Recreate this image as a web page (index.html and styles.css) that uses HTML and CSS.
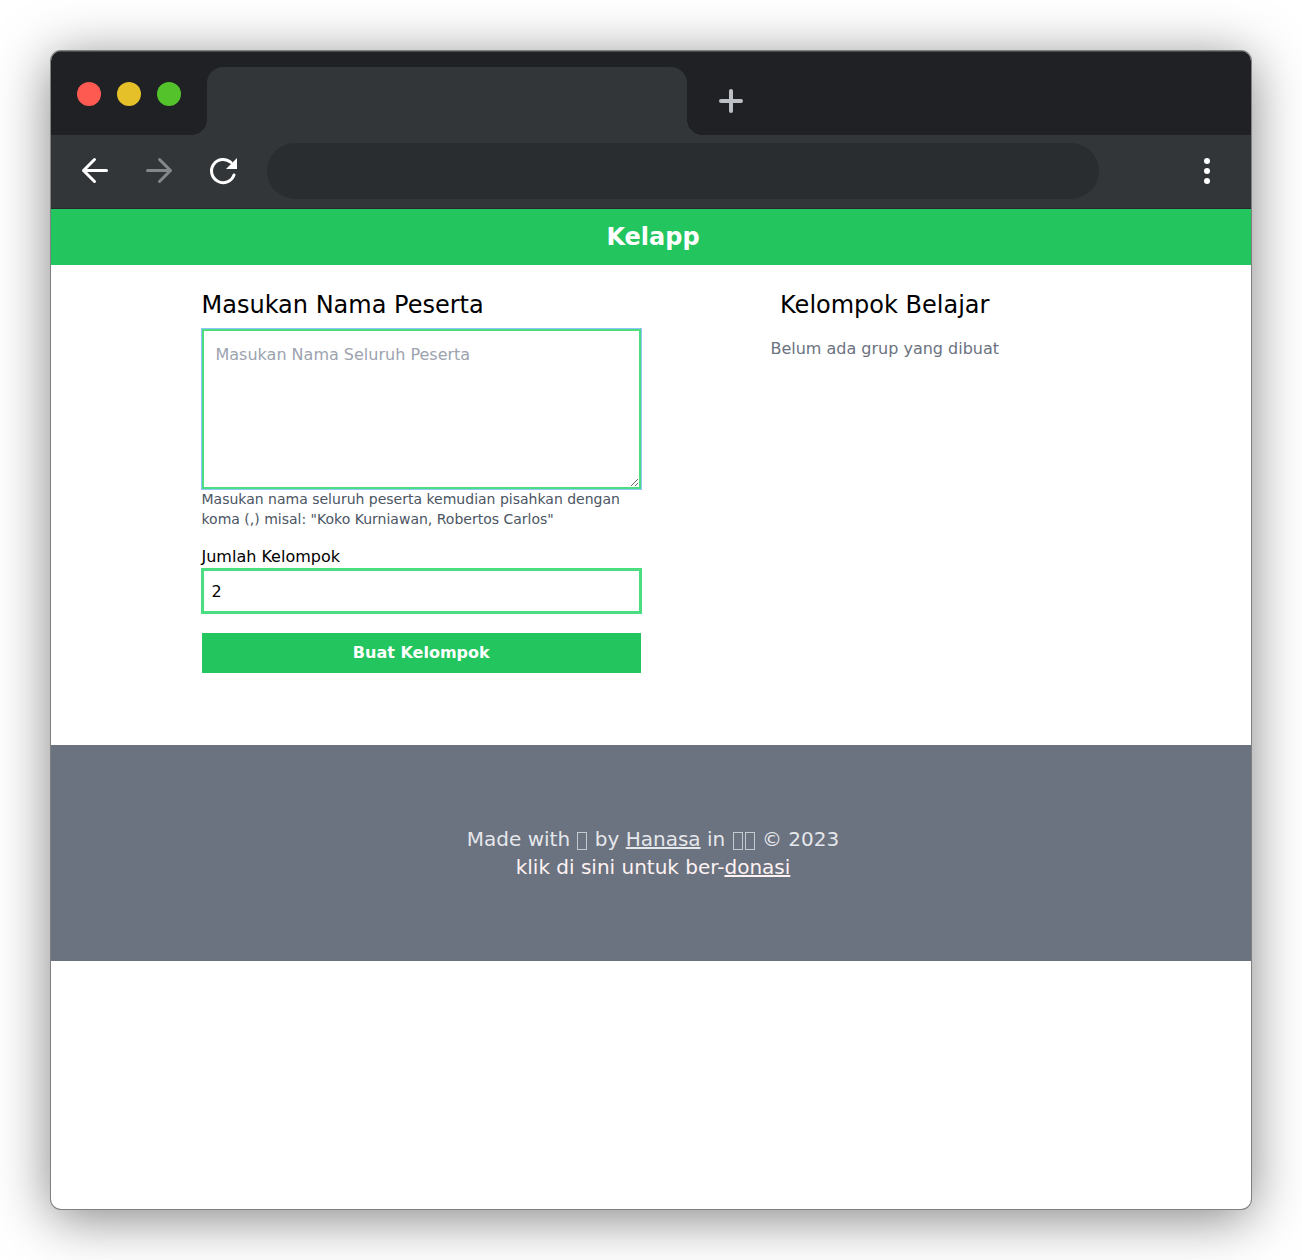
FILE: index.html
```html
<!DOCTYPE html>
<html lang="id">
<head>
<meta charset="utf-8">
<meta name="viewport" content="width=device-width, initial-scale=1">
<title>Kelapp</title>
<link rel="stylesheet" href="styles.css">
</head>
<body>
<div class="window">
  <div class="tabbar">
    <div class="lights">
      <span class="light light-close"></span>
      <span class="light light-min"></span>
      <span class="light light-max"></span>
    </div>
    <div class="tab"></div>
    <button class="icon-btn new-tab" type="button" aria-label="Tab baru">
      <svg width="24" height="24" viewBox="0 0 24 24" fill="none" stroke="#bdc1c6" stroke-width="4" stroke-linecap="round"><path d="M12 2v20M2 12h20"/></svg>
    </button>
  </div>
  <div class="toolbar">
    <button class="icon-btn" type="button" aria-label="Kembali">
      <svg width="32" height="32" viewBox="0 0 32 32" fill="none" stroke="#fff" stroke-width="3" stroke-linecap="round" stroke-linejoin="round"><path d="M27.500 15.500H4.500M15.500 4.500L4.500 15.500L15.500 26.500"/></svg>
    </button>
    <button class="icon-btn" type="button" aria-label="Maju">
      <svg width="32" height="32" viewBox="0 0 32 32" fill="none" stroke="#85888a" stroke-width="3" stroke-linecap="round" stroke-linejoin="round"><path d="M4.500 15.500H27.500M16.500 4.500L27.500 15.500L16.500 26.500"/></svg>
    </button>
    <button class="icon-btn" type="button" aria-label="Muat ulang">
      <svg width="32" height="32" viewBox="0 0 32 32" fill="none"><path d="M27 20A11.600 11.600 0 1 1 24 7.500" stroke="#fff" stroke-width="3" stroke-linecap="round"/><path d="M30 3v11H19z" fill="#fff"/></svg>
    </button>
    <input class="address" type="text" aria-label="Alamat">
    <button class="icon-btn" type="button" aria-label="Menu">
      <svg width="32" height="32" viewBox="0 0 32 32" fill="#fff"><circle cx="16" cy="6" r="3"/><circle cx="16" cy="16" r="3"/><circle cx="16" cy="26" r="3"/></svg>
    </button>
  </div>
  <div class="page">
    <header class="header"><h1>Kelapp</h1></header>
    <main class="main">
      <form class="form">
        <label class="title" for="names">Masukan Nama Peserta</label>
        <textarea class="field names" id="names" placeholder="Masukan Nama Seluruh Peserta"></textarea>
        <p class="hint">Masukan nama seluruh peserta kemudian pisahkan dengan koma (,) misal: "Koko Kurniawan, Robertos Carlos"</p>
        <label class="label" for="count">Jumlah Kelompok</label>
        <input class="field count" id="count" type="number" value="2">
        <button class="submit" type="button">Buat Kelompok</button>
      </form>
      <section class="groups">
        <h2 class="title">Kelompok Belajar</h2>
        <p class="empty">Belum ada grup yang dibuat</p>
      </section>
    </main>
    <footer class="footer">
      <p>Made with <span class="glyph-box"></span> by <a href="#">Hanasa</a> in <span class="glyph-box"></span><span class="glyph-box"></span> © 2023</p>
      <p class="donate">klik di sini untuk ber-<a href="#">donasi</a></p>
    </footer>
  </div>
</div>
</body>
</html>
```
FILE: styles.css
```css
* {
  box-sizing: border-box;
  margin: 0;
}

body {
  min-height: 100vh;
  padding: 51px;
  display: flex;
  background: #fff;
  color: #000;
  font: 16px/24px "DejaVu Sans", sans-serif;
}

input,
textarea,
button {
  font: inherit;
  color: inherit;
}

/* Browser window */
.window {
  flex: 1;
  min-width: 0;
  overflow: hidden;
  border-radius: 10px;
  background: #fff;
  box-shadow: 0 0 0 1px #808080, 0 8px 54px rgba(0, 0, 0, 0.5);
}

.tabbar {
  display: flex;
  height: 84px;
  padding-top: 16px;
  background: #202124;
  box-shadow: inset 0 1px #4a4c4e;
}

.lights {
  display: flex;
  gap: 16px;
  width: 156px;
  padding: 15px 26px;
}

.light {
  width: 24px;
  height: 24px;
  border-radius: 50%;
}

.light-close { background: #ff5a52; }
.light-min { background: #e6c029; }
.light-max { background: #53c22b; }

.tab {
  position: relative;
  width: 40%;
  border-radius: 16px 16px 0 0;
  background: #323639;
}

/* Concave feet joining the tab to the toolbar */
.tab::before,
.tab::after {
  content: "";
  position: absolute;
  bottom: 0;
  width: 16px;
  height: 16px;
}

.tab::before {
  right: 100%;
  background: radial-gradient(circle at 0 0, #202124 16px, #323639 16px);
}

.tab::after {
  left: 100%;
  background: radial-gradient(circle at 100% 0, #202124 16px, #323639 16px);
}

.icon-btn {
  flex: none;
  padding: 0;
  border: 0;
  background: none;
}

.icon-btn svg {
  display: block;
}

.new-tab {
  margin-left: 32px;
}

.toolbar {
  display: flex;
  align-items: center;
  gap: 32px;
  padding: 8px 28px 9px;
  background: #323639;
  border-bottom: 1px solid #27292c;
}

.address {
  flex: 1;
  min-width: 0;
  height: 56px;
  margin: 0 60px 0 -4px;
  padding: 0 28px;
  border: 0;
  border-radius: 28px;
  background: #292d30;
  color: #fff;
}

/* Page */
.page {
  margin-right: -4px;
}

.header {
  padding: 12px;
  background: #22c55e;
  color: #fff;
  text-align: center;
}

.header h1 {
  font-size: 24px;
  line-height: 32px;
}

.main {
  display: grid;
  grid-template-columns: 1fr 1fr;
  gap: 24px;
  width: 75%;
  margin: 0 auto;
  padding: 24px 0 72px;
}

.form {
  display: flex;
  flex-direction: column;
}

.title {
  font-size: 24px;
  font-weight: 400;
  line-height: 32px;
}

.field {
  width: 100%;
  border: 2px solid #4ade80;
  border-radius: 0;
  background: #fff;
  outline: none;
}

.names {
  height: 160px;
  margin-top: 8px;
  padding: 12px;
  box-shadow: 0 0 0 1px #93c5fd;
  resize: vertical;
}

.names::placeholder {
  color: #9ca3af;
}

.hint {
  color: #4b5563;
  font-size: 14px;
  line-height: 20px;
}

.label {
  margin-top: 16px;
}

.count {
  height: 44px;
  padding: 8px;
  box-shadow: 0 0 0 1px #4ade80;
  appearance: textfield;
}

.submit {
  margin-top: 20px;
  padding: 8px;
  border: 0;
  background: #22c55e;
  color: #fff;
  font-weight: 700;
}

.groups {
  text-align: center;
}

.empty {
  margin-top: 16px;
  color: #6b7280;
}

.footer {
  padding: 80px 16px;
  background: #6b7280;
  color: #e5e7eb;
  font-size: 20px;
  line-height: 28px;
  text-align: center;
}

.footer a {
  color: inherit;
}

.glyph-box {
  display: inline-block;
  width: 10px;
  height: 18px;
  margin: 0 1px;
  border: 1px solid #c5c9d0;
  vertical-align: -4px;
}

.donate {
  color: #fef2f2;
}
```
